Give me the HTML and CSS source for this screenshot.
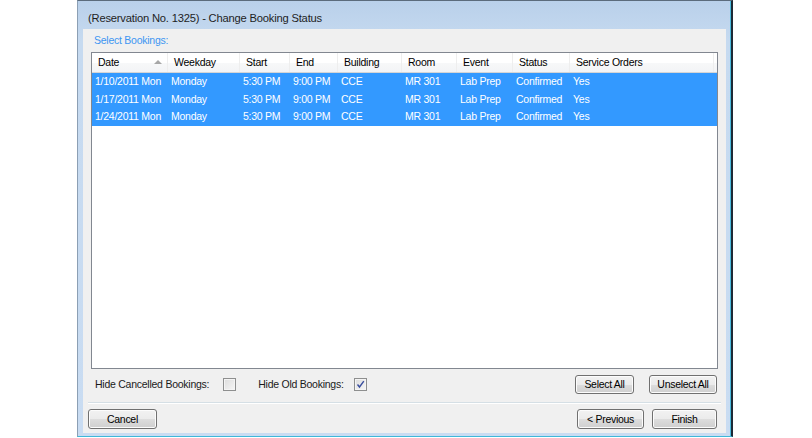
FILE: index.html
```html
<!DOCTYPE html>
<html>
<head>
<meta charset="utf-8">
<link rel="stylesheet" href="styles.css">
</head>
<body>
<div class="window">
  <div class="titlebar">(Reservation No. 1325) - Change Booking Status</div>
  <div class="client">
    <div class="group-label">Select Bookings:</div>
    <div class="listbox">
      <div class="grid header">
        <div class="th th-date">Date<span class="sort"></span></div>
        <div class="th">Weekday</div>
        <div class="th">Start</div>
        <div class="th">End</div>
        <div class="th">Building</div>
        <div class="th">Room</div>
        <div class="th">Event</div>
        <div class="th">Status</div>
        <div class="th">Service Orders</div>
      </div>
      <div class="grid row sel">
        <div class="td">1/10/2011 Mon</div><div class="td">Monday</div><div class="td">5:30 PM</div><div class="td">9:00 PM</div><div class="td">CCE</div><div class="td">MR 301</div><div class="td">Lab Prep</div><div class="td">Confirmed</div><div class="td">Yes</div>
      </div>
      <div class="grid row sel">
        <div class="td">1/17/2011 Mon</div><div class="td">Monday</div><div class="td">5:30 PM</div><div class="td">9:00 PM</div><div class="td">CCE</div><div class="td">MR 301</div><div class="td">Lab Prep</div><div class="td">Confirmed</div><div class="td">Yes</div>
      </div>
      <div class="grid row sel">
        <div class="td">1/24/2011 Mon</div><div class="td">Monday</div><div class="td">5:30 PM</div><div class="td">9:00 PM</div><div class="td">CCE</div><div class="td">MR 301</div><div class="td">Lab Prep</div><div class="td">Confirmed</div><div class="td">Yes</div>
      </div>
    </div>
    <div class="options">
      <span class="opt-label">Hide Cancelled Bookings:</span>
      <span class="checkbox cb1"></span>
      <span class="opt-label opt2">Hide Old Bookings:</span>
      <span class="checkbox checked cb2"><svg width="9" height="9" viewBox="0 0 9 9"><path d="M1.5 4.5 L3.5 7 L7.8 1.2" fill="none" stroke="#3a4f9f" stroke-width="1.4"/></svg></span>
      <span class="spacer"></span>
      <button class="btn btn-sel">Select All</button>
      <button class="btn btn-unsel">Unselect All</button>
    </div>
    <div class="separator"></div>
    <div class="footer">
      <button class="btn btn-cancel">Cancel</button>
      <span class="spacer"></span>
      <button class="btn btn-prev">&lt; Previous</button>
      <button class="btn btn-finish">Finish</button>
    </div>
  </div>
</div>
</body>
</html>
```
FILE: styles.css
```css
html, body {
  margin: 0;
  padding: 0;
  background: #ffffff;
}
body {
  width: 812px;
  height: 438px;
  overflow: hidden;
  font-family: "Liberation Sans", Arial, sans-serif;
  font-size: 10.5px;
  letter-spacing: -0.25px;
  color: #000;
}
.window {
  margin-left: 77px;
  width: 656px;
  height: 437px;
  box-sizing: border-box;
  border-top: 1px solid #5b6b7c;
  border-left: 1px solid #8c9fb4;
  border-right: 2px solid #1d2a36;
  border-bottom: 1px solid #3fb7d9;
  background: linear-gradient(#b9d0ea, #c6daf0 40px, #c9dcf2);
  box-shadow: inset -1px 0 0 #49b9dc;
  display: flex;
  flex-direction: column;
  padding: 0 5px 3px 5px;
}
.titlebar {
  height: 28px;
  box-sizing: border-box;
  padding: 10px 0 0 5px;
  font-size: 11.2px;
  letter-spacing: -0.2px;
  color: #1e1e1e;
  line-height: 14px;
}
.client {
  background: #f0f0f0;
  height: 404px;
  display: flex;
  flex-direction: column;
  padding: 0 5px 0 5px;
  box-sizing: border-box;
}
.group-label {
  margin: 5px 0 0 6px;
  height: 13px;
  line-height: 13px;
  color: #3d96f2;
}
.listbox {
  margin: 5px 3px 0 3px;
  height: 317px;
  box-sizing: border-box;
  border: 1px solid #828790;
  background: #fff;
}
.grid {
  display: grid;
  grid-template-columns: 76px 72px 50px 48px 64px 55px 56px 57px 144px 1fr;
}
.header {
  height: 20px;
  background: linear-gradient(#ffffff, #ffffff 50%, #f7f8f9 51%, #f3f4f6);
  border-bottom: 1px solid #d5d5d5;
  box-sizing: border-box;
}
.th {
  line-height: 19px;
  padding-left: 6px;
  border-right: 1px solid #eeeeee;
  white-space: nowrap;
  position: relative;
}
.sort {
  position: absolute;
  right: 5px;
  top: 7px;
  width: 0;
  height: 0;
  border-left: 4px solid transparent;
  border-right: 4px solid transparent;
  border-bottom: 4px solid #a7a7a7;
}
.row {
  height: 17.6px;
}
.sel {
  background: #3399ff;
  color: #ffffff;
}
.td {
  line-height: 17.6px;
  padding-left: 3px;
  white-space: nowrap;
}
.options {
  display: flex;
  align-items: center;
  margin-top: 5px;
  height: 20px;
  padding-left: 7px;
  padding-right: 4px;
}
.opt-label { color: #1a1a1a; }
.checkbox {
  width: 11px;
  height: 11px;
  border: 1px solid #8e8f8f;
  background: linear-gradient(135deg, #dcdcdc, #f6f6f6);
  box-shadow: inset 0 0 0 1px #f4f4f4;
  display: flex;
  align-items: center;
  justify-content: center;
}
.cb1 { margin-left: 14px; }
.opt2 { margin-left: 22px; }
.cb2 { margin-left: 10px; }
.spacer { flex: 1; }
.btn {
  font-family: "Liberation Sans", Arial, sans-serif;
  font-size: 10.5px;
  letter-spacing: -0.3px;
  color: #000;
  border: 1px solid #707070;
  border-radius: 3px;
  background: linear-gradient(#f2f2f2, #ebebeb 50%, #dddddd 51%, #cfcfcf);
  box-shadow: inset 0 0 0 1px #fcfcfc;
  padding: 0;
  margin: 0;
  height: 19px;
  line-height: 16px;
}
.btn-sel { width: 59px; }
.btn-unsel { width: 68px; margin-left: 15px; }
.separator {
  margin: 8px 0 0 0;
  height: 1px;
  background: #d5dfe5;
  border-bottom: 1px solid #ffffff;
}
.footer {
  display: flex;
  margin-top: 5px;
  padding-right: 4px;
  height: 20px;
}
.footer .btn { height: 20px; }
.btn-cancel { width: 69px; }
.btn-prev { width: 67px; }
.btn-finish { width: 65px; margin-left: 8px; }
```
